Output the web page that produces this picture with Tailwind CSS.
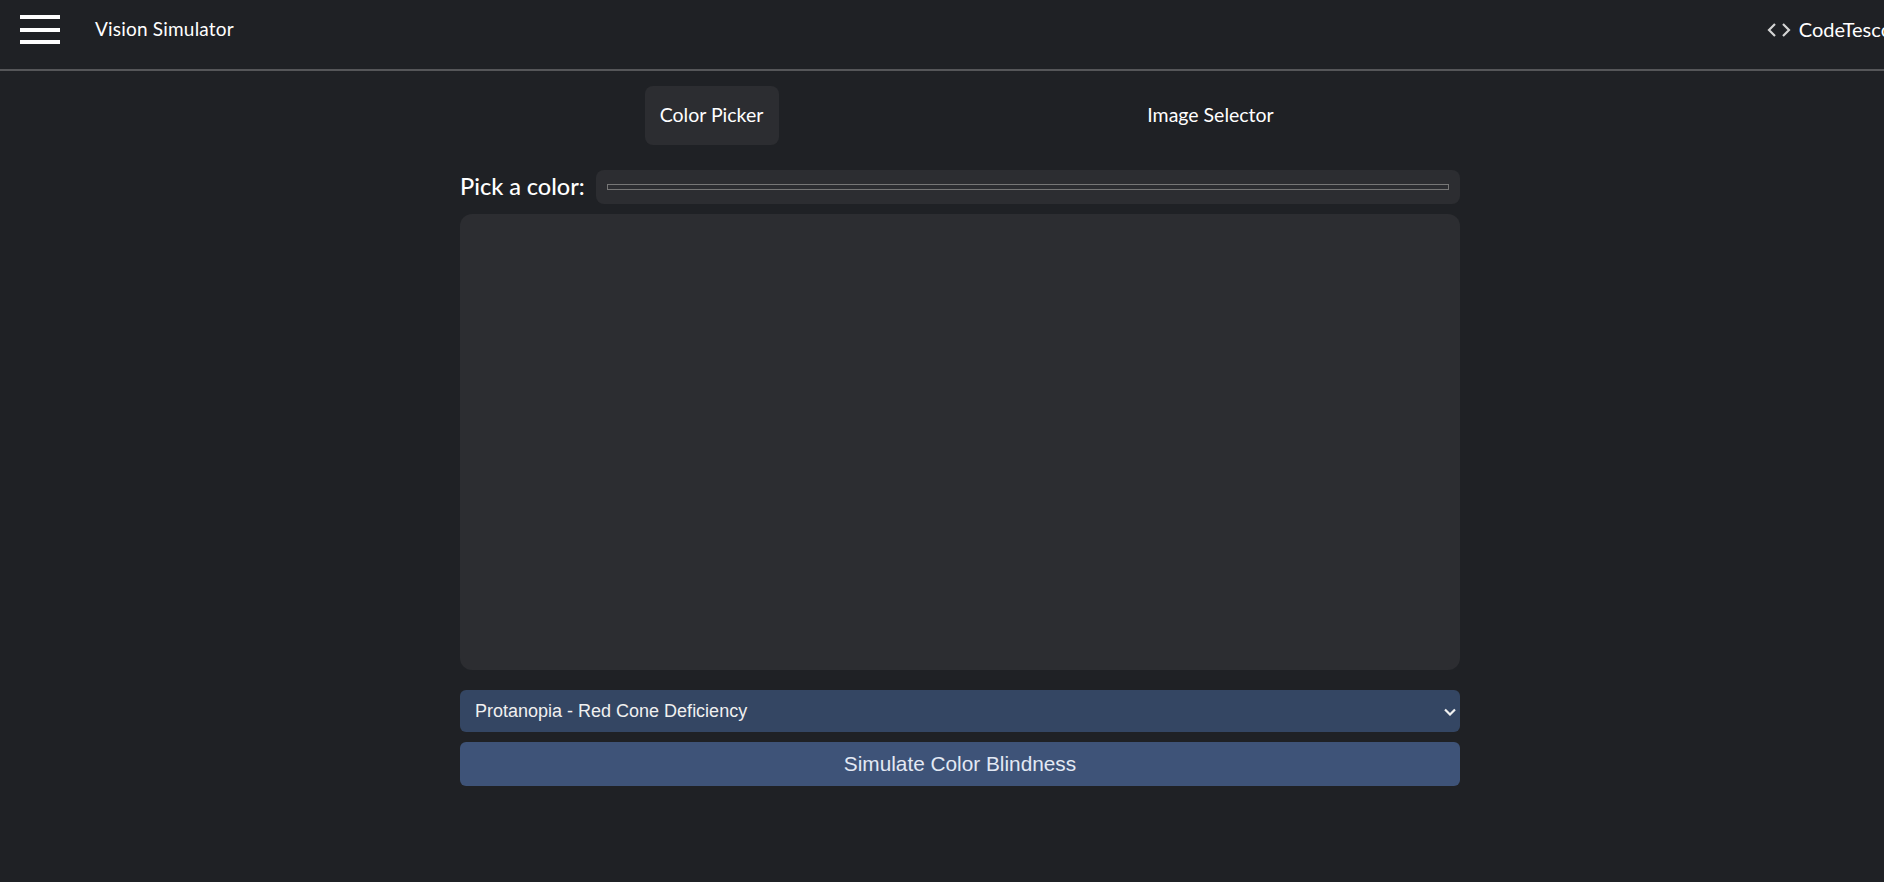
<!DOCTYPE html>
<html lang="en">

<head>
    <meta charset="UTF-8">
    <meta name="viewport" content="width=device-width, initial-scale=1.0">
    <title>Vision Simulator</title>
    <script src="https://cdn.jsdelivr.net/npm/@tailwindcss/browser@4"></script>
</head>

<body class="w-screen h-screen overflow-hidden bg-[#1f2125] text-white font-['Lato',sans-serif]">
    <header class="flex items-center h-[71px] pb-[10px] pl-5 border-b-2 border-[#555659]">
        <button class="flex flex-col w-10 shrink-0">
            <span class="block h-1 bg-white"></span>
            <span class="block h-1 mt-[9px] bg-white"></span>
            <span class="block h-1 mt-2 bg-white"></span>
        </button>
        <h1 class="ml-[35px] text-[19px] tracking-[0.2px]">Vision Simulator</h1>
        <div class="flex items-center gap-2 ml-auto mr-[-8px] shrink-0">
            <svg width="24" height="14" viewBox="0 0 24 14" fill="none" stroke="#d4d4d4" stroke-width="2.2">
                <path d="M8 1 L2 7 L8 13"></path>
                <path d="M16 1 L22 7 L16 13"></path>
            </svg>
            <span class="pb-[2px] text-[20px]">CodeTesco</span>
        </div>
    </header>

    <main class="w-[1000px] ml-[460px]">
        <div class="grid grid-cols-2 justify-items-center ml-[2px] pt-[15px]">
            <button class="h-[59px] w-[134px] pb-[2px] rounded-lg bg-[#2c2d31] text-[19.5px]">Color Picker</button>
            <button class="h-[59px] w-[150px] pb-[2px] rounded-lg text-[19.5px]">Image Selector</button>
        </div>

        <div class="flex items-center gap-[10px] mt-[25px]">
            <label class="w-[126px] text-[23.5px] leading-none font-medium whitespace-nowrap">Pick a color:</label>
            <div class="flex-1 h-[34px] rounded-lg bg-[#2c2d31] px-[11px] pt-[14px]">
                <div class="h-[6px] border border-[#767676]"></div>
            </div>
        </div>

        <div class="h-[456px] mt-[10px] rounded-xl bg-[#2c2d31]"></div>

        <div class="relative mt-5">
            <select class="block w-full h-[42px] pl-[15px] rounded-md bg-[#344663] text-[#f0f0f0] text-[18px] appearance-none font-['Liberation_Sans',sans-serif]">
                <option>Protanopia - Red Cone Deficiency</option>
            </select>
            <svg class="absolute right-1 top-[18px]" width="12" height="8" viewBox="0 0 12 8" fill="none" stroke="#f0f0f0" stroke-width="2.2">
                <path d="M1 1.5 L6 6.5 L11 1.5"></path>
            </svg>
        </div>

        <button class="block w-full h-11 mt-[10px] rounded-md bg-[#3e5378] text-[#e3e9f4] text-[20.8px] font-['Liberation_Sans',sans-serif]">Simulate Color Blindness</button>
    </main>
</body>

</html>
